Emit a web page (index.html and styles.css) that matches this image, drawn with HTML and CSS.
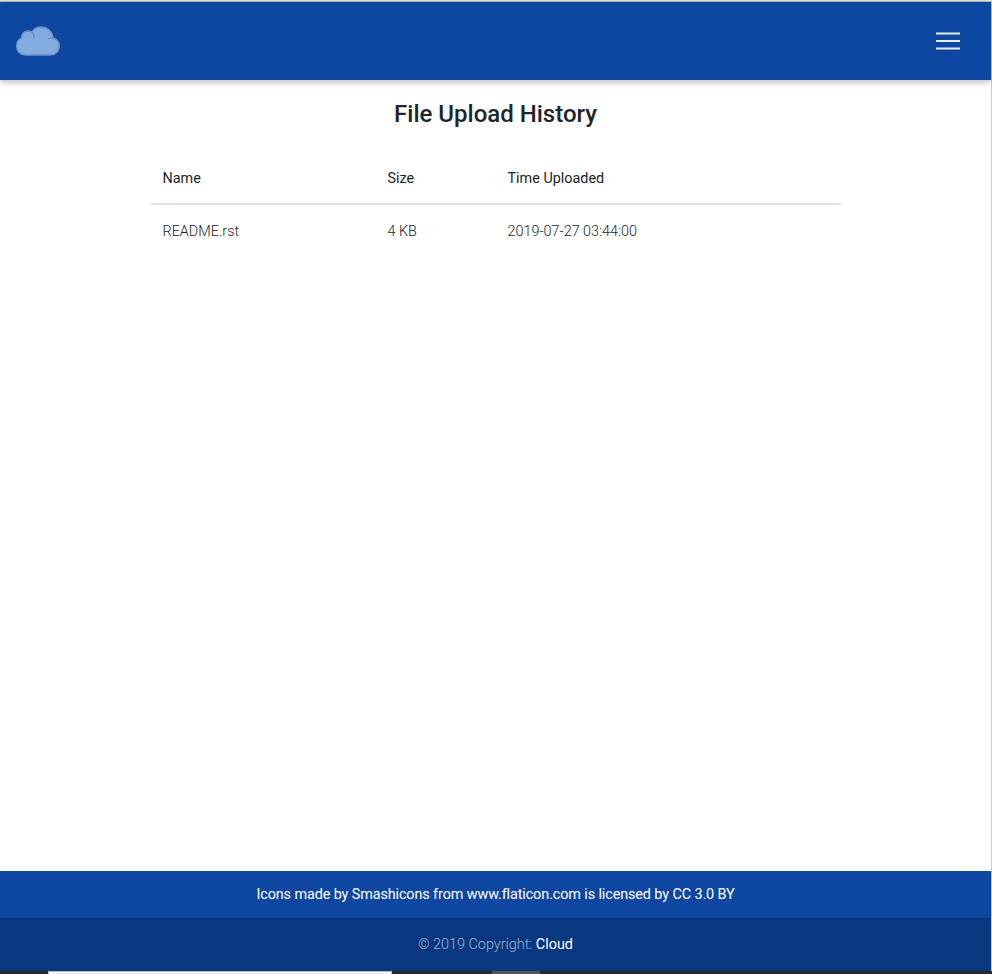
FILE: index.html
```html
<!DOCTYPE html>
<html lang="en">
<head>
<meta charset="utf-8">
<title>File Upload History</title>
<link rel="stylesheet" href="styles.css">
</head>
<body>
<div class="window">
  <header class="navbar">
    <a class="brand" aria-label="Cloud">
      <svg width="46" height="32" viewBox="0 0 46 32" fill="#82acdd" stroke="#718ccb" stroke-width="1.5" stroke-linecap="round" stroke-linejoin="round">
        <path d="M10.500 30C5 30 1.700 26 1.700 21.200C1.700 17 3.800 14 6.700 12.900C6.500 9 9 6.100 13 6.100C14.500 6.100 15.800 6.500 16.700 7.200C18.700 3.900 22 2 26 2C32.500 2 37.700 6.800 38 13.200C42 14 44.300 17.300 44.300 21.200C44.300 26.200 40.500 30 35.500 30Z"/>
        <path fill="none" d="M16.700 7.200C18.500 8.500 19.100 10.300 18.900 12.500M38 13.200Q35.500 12.900 33.500 13.500"/>
      </svg>
    </a>
    <svg class="toggler" width="30" height="30" viewBox="0 0 30 30" stroke="#fff" stroke-opacity=".9" stroke-width="2" stroke-linecap="butt">
      <path d="M3 7.500h24M3 15h24M3 22.500h24"/>
    </svg>
  </header>
  <main class="content">
    <h1 class="title">File Upload History</h1>
    <table class="files">
      <thead><tr><th class="name">Name</th><th class="size">Size</th><th>Time Uploaded</th></tr></thead>
      <tbody><tr><td>README.rst</td><td>4 KB</td><td>2019-07-27 03:44:00</td></tr></tbody>
    </table>
  </main>
  <footer class="footer">
    <div class="credits">Icons made by <a>Smashicons</a> from <a>www.flaticon.com</a> is licensed by <a>CC 3.0 BY</a></div>
    <div class="copyright">© 2019 Copyright: <a>Cloud</a></div>
  </footer>
</div>
<div class="taskbar"><span class="search"></span><span class="task"></span></div>
</body>
</html>
```

FILE: styles.css
```css
* { box-sizing: border-box; }
body {
  margin: 0;
  height: 974px;
  display: flex;
  flex-direction: column;
  overflow: hidden;
  background: #fff;
  color: #212529;
  font-family: Roboto, "Liberation Sans", sans-serif;
  font-weight: 300;
}
.window {
  flex: 1;
  display: flex;
  flex-direction: column;
  border-top: 1px solid #b9bdc4;
  border-right: 1px solid #ccc;
  margin-top: 1px;
  box-shadow: 0 -1px #e3e5e8;
}
.navbar {
  height: 78px;
  display: flex;
  justify-content: space-between;
  align-items: center;
  padding: 0 28px 0 15px;
  background: #0d47a1;
  box-shadow: 0 2px 5px rgba(0,0,0,.16), 0 2px 10px rgba(0,0,0,.12);
}
.brand, .toggler { display: block; }
.brand svg { display: block; }
.content { flex: 1; }
.title {
  margin: 20px 0 0;
  text-align: center;
  font-size: 24px;
  line-height: 29px;
  font-weight: 500;
}
.files {
  width: 690px;
  margin: 22px auto 0 151px;
  border-collapse: collapse;
  table-layout: fixed;
}
.name { width: 225px; }
.size { width: 120px; }
.files th, .files td {
  padding: 2px 12px 0 11.5px;
  text-align: left;
  font-size: 14.4px;
  line-height: 21px;
}
.files th {
  height: 53px;
  border-bottom: 2px solid #dee2e6;
  font-weight: 400;
}
.files td { height: 52px; }
.footer {
  background: #0d47a1;
  color: #fff;
  text-align: center;
  font-size: 14.4px;
}
.credits { height: 47px; line-height: 47px; font-weight: 400; letter-spacing: -.105px; }
.copyright {
  height: 53px;
  line-height: 53px;
  background: rgba(0,0,0,.2);
  color: rgba(255,255,255,.6);
}
.copyright a { color: #fff; font-weight: 400; }
.taskbar {
  height: 3px;
  display: flex;
  background: #292929;
}
.search {
  width: 344px;
  margin-left: 48px;
  background: #f2f2f2;
  border: 1px solid #bbb;
  border-bottom: 0;
}
.task { width: 48px; margin-left: 100px; background: #555; }
```
